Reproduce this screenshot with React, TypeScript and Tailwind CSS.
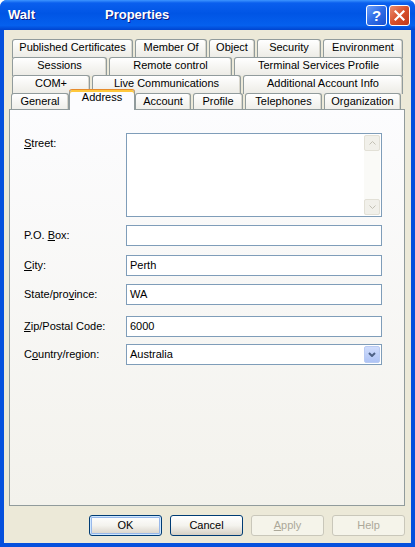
import type { JSX, ReactNode } from 'react'

interface TabProps {
  label: string
  width: number
  selected?: boolean
}

const TAB_ROWS: { start: number; tabs: TabProps[] }[] = [
  {
    start: 8,
    tabs: [
      { label: 'Published Certificates', width: 121 },
      { label: 'Member Of', width: 72 },
      { label: 'Object', width: 46 },
      { label: 'Security', width: 64 },
      { label: 'Environment', width: 80 },
    ],
  },
  {
    start: 8,
    tabs: [
      { label: 'Sessions', width: 95 },
      { label: 'Remote control', width: 123 },
      { label: 'Terminal Services Profile', width: 169 },
    ],
  },
  {
    start: 8,
    tabs: [
      { label: 'COM+', width: 78 },
      { label: 'Live Communications', width: 149 },
      { label: 'Additional Account Info', width: 160 },
    ],
  },
]

function Tab({ label, width }: TabProps): JSX.Element {
  return (
    <div
      className="flex h-[19px] items-start justify-center rounded-t-[3px] border border-b-0 border-[#919B9C] bg-gradient-to-b from-[#FFFFFF] to-[#ECEBE5] pt-[1px] leading-[13px] shadow-[inset_-1px_0_0_#D8D6CC]"
      style={{ width }}
    >
      {label}
    </div>
  )
}

function Field({ label, value, top }: { label: ReactNode; value?: string; top: string }): JSX.Element {
  return (
    <div className={`flex items-center ${top}`}>
      <div className="w-[102px]">{label}</div>
      <div className="flex h-[21px] w-[256px] items-center border border-[#7F9DB9] bg-white pl-[3px]">{value}</div>
    </div>
  )
}

function Btn({ children, disabled, def }: { children: ReactNode; disabled?: boolean; def?: boolean }): JSX.Element {
  if (disabled) {
    return (
      <div className="flex h-[21px] w-[73px] items-center justify-center rounded-[3px] border border-[#C9C7BA] bg-[#F5F4EA] text-[#ACA899]">
        {children}
      </div>
    )
  }
  return (
    <div
      className={`flex h-[21px] w-[73px] items-center justify-center rounded-[3px] border border-[#003C74] bg-gradient-to-b from-[#FFFFFF] via-[#F4F3EE] to-[#D6D0C5] ${
        def ? 'shadow-[inset_0_0_0_1px_#CEE7FF,inset_0_0_0_2px_#98B8EA]' : ''
      }`}
    >
      {children}
    </div>
  )
}

export default function App(): JSX.Element {
  return (
    <div className="flex h-[547px] w-[415px] flex-col overflow-hidden rounded-t-[7px] bg-[#0550DD] font-['Liberation_Sans',Arial,sans-serif] text-[11px] text-black">
      {/* title bar */}
      <div className="flex h-[30px] shrink-0 items-center bg-[linear-gradient(to_bottom,#3D95FF_0%,#0A5FEE_10%,#0055E5_45%,#0560EE_85%,#0044CF_100%)] pl-[8px] pr-[5px]">
        <span className="text-[13px] font-bold text-white [text-shadow:1px_1px_#0A1883]">Walt</span>
        <span className="ml-[70px] text-[13px] font-bold text-white [text-shadow:1px_1px_#0A1883]">Properties</span>
        <div className="ml-auto flex gap-[2px]">
          <div className="flex h-[21px] w-[21px] items-center justify-center rounded-[3px] border border-white bg-gradient-to-br from-[#6A9EFA] via-[#2E6BE6] to-[#1A50D0]">
            <span className="text-[15px] font-bold leading-none text-white">?</span>
          </div>
          <div className="flex h-[21px] w-[21px] items-center justify-center rounded-[3px] border border-white bg-gradient-to-br from-[#E98B6E] via-[#D8502A] to-[#C0381A]">
            <svg width="11" height="11" viewBox="0 0 11 11">
              <path d="M1.5 1.5 L9.5 9.5 M9.5 1.5 L1.5 9.5" stroke="white" strokeWidth="2.2" strokeLinecap="square" />
            </svg>
          </div>
        </div>
      </div>

      {/* client area */}
      <div className="mx-[4px] mb-[4px] flex flex-1 flex-col bg-[#ECE9D8]">
        <div className="pt-[9px]">
          {TAB_ROWS.map((row, i) => (
            <div key={i} className="flex h-[18px] gap-[2px]" style={{ paddingLeft: row.start }}>
              {row.tabs.map((t) => (
                <Tab key={t.label} {...t} />
              ))}
            </div>
          ))}
          <div className="flex h-[16px] items-start pl-[7px]">
            <Tab label="General" width={58} />
            <div className="relative z-10 -mt-[3px] flex h-[20px] w-[66px] justify-center rounded-t-[3px] border-x border-[#919B9C] bg-[#FCFCFE] pt-[1px] leading-[13px] shadow-[inset_0_2px_0_#FFC83C,0_-1px_0_#E68B2C]">
              Address
            </div>
            <Tab label="Account" width={56} />
            <div className="w-[2px]" />
            <Tab label="Profile" width={50} />
            <div className="w-[2px]" />
            <Tab label="Telephones" width={77} />
            <div className="w-[2px]" />
            <Tab label="Organization" width={77} />
          </div>
        </div>

        {/* panel */}
        <div className="ml-[5px] h-[397px] w-[396px] border border-[#919B9C] bg-gradient-to-b from-[#FCFCFE] to-[#F3F2EC] pl-[14px] pt-[23px]">
          <div className="flex items-start">
            <div className="w-[102px] pt-[2px]">
              <u>S</u>treet:
            </div>
            <div className="flex h-[84px] w-[256px] justify-end border border-[#7F9DB9] bg-white p-[1px]">
              <div className="flex w-[16px] flex-col justify-between bg-[#FAFAF7]">
                <div className="flex h-[16px] items-center justify-center rounded-[2px] border border-[#E2E0D6] bg-[#F1F0EA]">
                  <svg width="7" height="4" viewBox="0 0 7 4">
                    <path d="M0.5 3.5 L3.5 0.5 L6.5 3.5" stroke="#C2C0B4" fill="none" />
                  </svg>
                </div>
                <div className="flex h-[16px] items-center justify-center rounded-[2px] border border-[#E2E0D6] bg-[#F1F0EA]">
                  <svg width="7" height="4" viewBox="0 0 7 4">
                    <path d="M0.5 0.5 L3.5 3.5 L6.5 0.5" stroke="#C2C0B4" fill="none" />
                  </svg>
                </div>
              </div>
            </div>
          </div>
          <Field
            top="mt-[8px]"
            label={
              <>
                P.O. <u>B</u>ox:
              </>
            }
          />
          <Field
            top="mt-[9px]"
            value="Perth"
            label={
              <>
                <u>C</u>ity:
              </>
            }
          />
          <Field
            top="mt-[8px]"
            value="WA"
            label={
              <>
                State/pro<u>v</u>ince:
              </>
            }
          />
          <Field
            top="mt-[11px]"
            value="6000"
            label={
              <>
                <u>Z</u>ip/Postal Code:
              </>
            }
          />
          <div className="mt-[7px] flex items-center">
            <div className="w-[102px]">
              C<u>o</u>untry/region:
            </div>
            <div className="flex h-[21px] w-[256px] items-center border border-[#7F9DB9] bg-white pl-[3px] pr-[1px]">
              <span className="flex-1">Australia</span>
              <div className="flex h-[17px] w-[16px] items-center justify-center rounded-[2px] border border-[#B9CBF3] bg-gradient-to-b from-[#D0DDFC] to-[#AEC3F5]">
                <svg width="8" height="5" viewBox="0 0 8 5">
                  <path d="M1 1 L4 4 L7 1" stroke="#4D6185" strokeWidth="2" fill="none" />
                </svg>
              </div>
            </div>
          </div>
        </div>

        {/* buttons */}
        <div className="mt-[9px] flex justify-end gap-[8px] pr-[6px]">
          <Btn def>OK</Btn>
          <Btn>Cancel</Btn>
          <Btn disabled>
            <span>
              <u>A</u>pply
            </span>
          </Btn>
          <Btn disabled>Help</Btn>
        </div>
      </div>
    </div>
  )
}
